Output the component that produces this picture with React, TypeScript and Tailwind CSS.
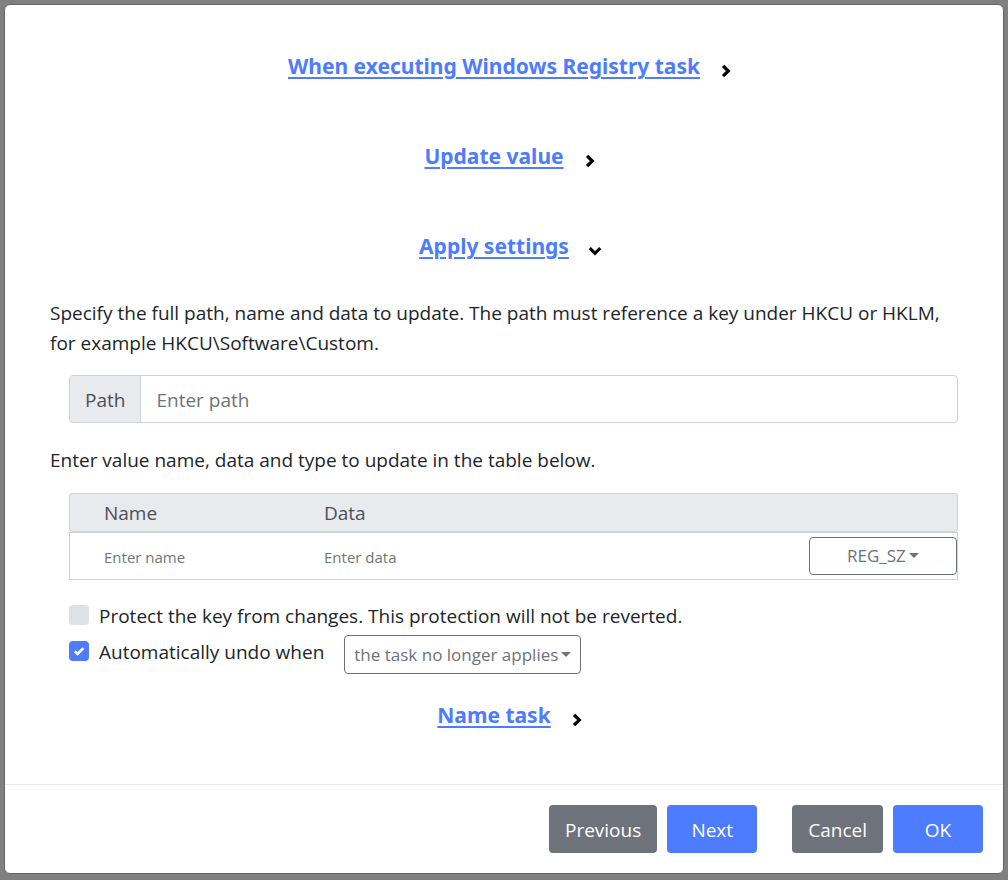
import { useState } from "react";
import type { ReactNode } from "react";

function Chevron({ open }: { open: boolean }) {
  return (
    <svg
      viewBox="0 0 14 14"
      className={open ? "mt-[9px] size-[14px] rotate-90" : "mt-[9px] size-[14px]"}
      fill="none"
      stroke="#000"
      strokeWidth="3.2"
      strokeLinecap="square"
      aria-hidden="true"
    >
      <path d="M5.2 2.9 9.3 7 5.2 11.1" />
    </svg>
  );
}

function SectionLink({ title, open = false }: { title: string; open?: boolean }) {
  return (
    <h2 className="flex h-[30px] items-center justify-center gap-[19px] pl-[13px] font-['Noto_Sans','Open_Sans',sans-serif] text-[21px] leading-[30px] font-bold text-[#4d7cfe]">
      <a href="#" aria-expanded={open} className="underline decoration-2 underline-offset-[3px]">
        {title}
      </a>
      <Chevron open={open} />
    </h2>
  );
}

function Caret({ className }: { className: string }) {
  return (
    <svg viewBox="0 0 10 5" className={className} fill="#6e727b" aria-hidden="true">
      <path d="M0 0h10L5 5z" />
    </svg>
  );
}

function Tick() {
  return (
    <svg
      viewBox="0 0 20 20"
      className="pointer-events-none absolute inset-0 hidden size-5 peer-checked:block"
      fill="none"
      stroke="#fff"
      strokeWidth="2.6"
      aria-hidden="true"
    >
      <path d="m5.8 10.3 2.8 2.7 5.7-5.8" />
    </svg>
  );
}

function CheckRow({
  id,
  label,
  checked = false,
  children,
}: {
  id: string;
  label: string;
  checked?: boolean;
  children?: ReactNode;
}) {
  const [on, setOn] = useState(checked);
  return (
    <div className="flex h-9 items-start">
      <span className="relative mt-1 mr-[10px] size-5 shrink-0">
        <input
          id={id}
          type="checkbox"
          checked={on}
          onChange={(e) => setOn(e.target.checked)}
          className="peer block size-5 appearance-none rounded bg-[#dee2e6] checked:bg-[#4d7cfe]"
        />
        <Tick />
      </span>
      <label htmlFor={id}>{label}</label>
      {children}
    </div>
  );
}

const buttonBase = "h-12 rounded px-4 pt-[2px] text-white";
const secondary = `${buttonBase} bg-[#6e727b]`;
const primary = `${buttonBase} min-w-[90px] bg-[#4d7cfe]`;

export default function App() {
  return (
    <div className="min-h-screen bg-[#808080] px-1 pt-1 pb-[6px] font-['Open_Sans','Noto_Sans',sans-serif] text-[19px] leading-[30px] text-[#212529]">
      <div role="dialog" aria-label="Windows Registry task" className="rounded-md border border-[#666] bg-white">
        <main className="px-[45px] pt-[46px] pb-[54px]">
          <div className="flex flex-col gap-[60px]">
            <SectionLink title="When executing Windows Registry task" />
            <SectionLink title="Update value" />
            <SectionLink title="Apply settings" open />
          </div>

          <p className="mt-[37px]">
            Specify the full path, name and data to update. The path must reference a key under HKCU or HKLM, for
            example HKCU\Software\Custom.
          </p>

          <div className="mt-[17px] ml-[19px] flex h-12 overflow-hidden rounded border border-[#ced0da]">
            <label htmlFor="path" className="flex items-center border-r border-[#ced0da] bg-[#e9eaed] px-[15px] pt-[2px] text-[#495057]">
              Path
            </label>
            <input id="path" placeholder="Enter path" className="min-w-0 flex-1 px-[15px] pt-[2px] outline-none placeholder:text-[#6e727b]" />
          </div>

          <p className="mt-[22px]">Enter value name, data and type to update in the table below.</p>

          <div className="ml-[19px]">
            <table className="mt-[18px] w-full table-fixed border-separate border-spacing-0">
              <colgroup>
                <col className="w-[255px]" />
                <col />
                <col className="w-[150px]" />
              </colgroup>
              <thead>
                <tr className="h-[39px] text-left text-[#495057]">
                  <th className="rounded-l border-y border-l border-[#ced0da] bg-[#e9eaed] p-0 pl-[34px] font-normal">Name</th>
                  <th className="border-y border-[#ced0da] bg-[#e9eaed] p-0 font-normal">Data</th>
                  <td className="rounded-r border-y border-r border-[#ced0da] bg-[#e9eaed] p-0" />
                </tr>
              </thead>
              <tbody>
                <tr className="h-12 text-[15px]">
                  <td className="border-y border-l border-[#ced0da] p-0 pl-[34px]">
                    <input aria-label="Name" placeholder="Enter name" className="w-full pt-[2px] outline-none placeholder:text-[#757575]" />
                  </td>
                  <td className="border-y border-[#ced0da] p-0">
                    <input aria-label="Data" placeholder="Enter data" className="w-full pt-[2px] outline-none placeholder:text-[#757575]" />
                  </td>
                  <td className="border-y border-r border-[#ced0da] p-0 pl-px">
                    <div className="relative">
                      <select
                        aria-label="Type"
                        className="block h-[38px] w-full appearance-none rounded border border-[#6e727b] bg-white pl-[37px] text-[17px] text-[#6e727b]"
                      >
                        <option>REG_SZ</option>
                      </select>
                      <Caret className="pointer-events-none absolute top-4 right-[38px] h-[5px] w-[10px]" />
                    </div>
                  </td>
                </tr>
              </tbody>
            </table>

            <div className="mt-[21px]">
              <CheckRow id="protect" label="Protect the key from changes. This protection will not be reverted." />
              <CheckRow id="undo" label="Automatically undo when" checked>
                <div className="relative ml-5 -mt-[2px]">
                  <select
                    aria-label="Undo condition"
                    className="block h-[39px] w-[237px] appearance-none rounded border border-[#6e727b] bg-white pl-[9px] text-[17px] text-[#6e727b]"
                  >
                    <option>the task no longer applies</option>
                  </select>
                  <Caret className="pointer-events-none absolute top-[17px] right-[10px] h-[5px] w-[10px]" />
                </div>
              </CheckRow>
            </div>
          </div>

          <div className="mt-[27px]">
            <SectionLink title="Name task" />
          </div>
        </main>

        <footer className="flex justify-end gap-[10px] border-t border-[#e9eaed] p-5">
          <button type="button" className={secondary}>Previous</button>
          <button type="button" className={primary}>Next</button>
          <button type="button" className={`${secondary} ml-[25px]`}>Cancel</button>
          <button type="button" className={primary}>OK</button>
        </footer>
      </div>
    </div>
  );
}
